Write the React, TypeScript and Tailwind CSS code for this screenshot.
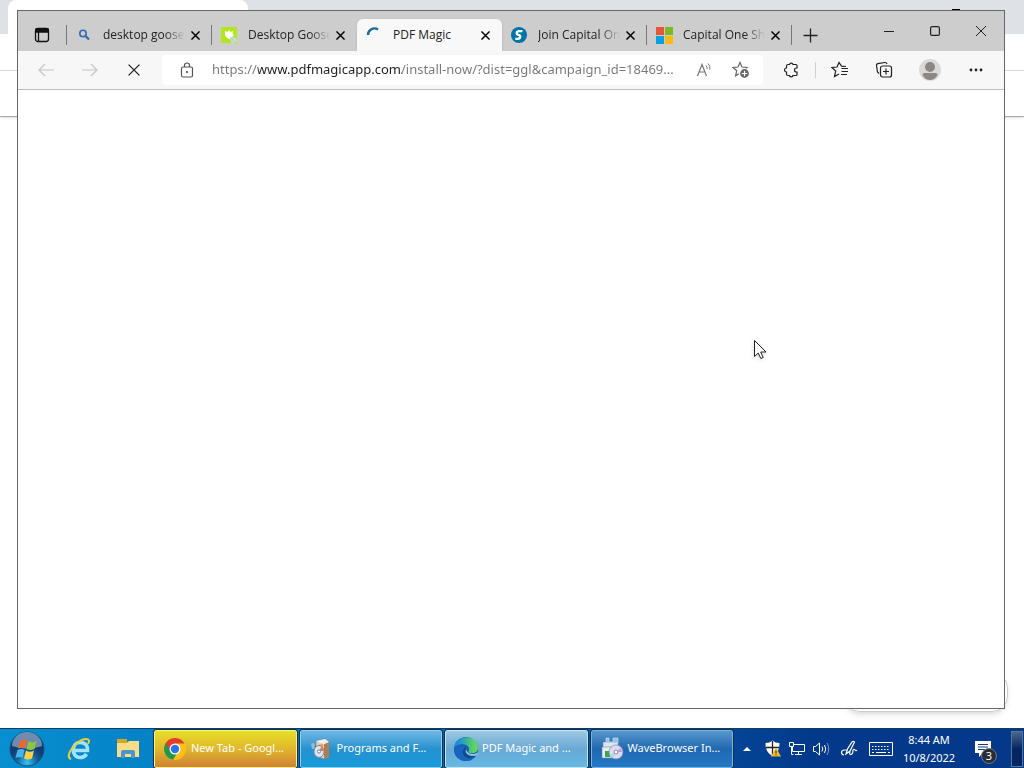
import type { ReactNode } from "react";

const CloseX = ({ size = 9, weight = 1.6 }: { size?: number; weight?: number }) => (
  <svg width={size} height={size} viewBox="0 0 10 10" stroke="currentColor" strokeWidth={weight}>
    <path d="M.5.5l9 9M9.5.5l-9 9" />
  </svg>
);

const SearchFavicon = () => (
  <svg width="16" height="16" viewBox="0 0 16 16" fill="none" stroke="#2f6bb5" strokeWidth="1.6">
    <circle cx="7" cy="6.5" r="3.2" />
    <path d="M9.5 9l3.5 3.5" strokeWidth="2.2" />
  </svg>
);

const GooseFavicon = () => (
  <svg width="16" height="16" viewBox="0 0 16 16">
    <path d="M0 0h16v16H0z" fill="#b5e61d" />
    <path d="M4 4l2.5 1L8 3l1.500 2L12 4l-.5 3 1.500 1-4 4-3-1-2-3z" fill="#fff" />
    <path d="M9 9.5l6 1.500 1 3-3 2-3-1z" fill="#c4dfdc" />
    <path d="M10 11l3 3" stroke="#a3c4cf" />
  </svg>
);

const Spinner = () => (
  <svg width="16" height="16" viewBox="0 0 16 16" fill="none">
    <path d="M2 8A6.500 6.500 0 0 1 12 2.500" stroke="#176d98" strokeWidth="2.4" />
  </svg>
);

const SFavicon = () => (
  <svg width="16" height="16" viewBox="0 0 16 16" fill="none">
    <circle cx="8" cy="8" r="8" fill="#0073a8" />
    <path
      d="M11.500 4.200H8.300c-3.400 0-3.300 3.100-.8 3.700 2.900.6 2 3.900-.7 3.900H4.300"
      stroke="#fff"
      strokeWidth="2.3"
    />
  </svg>
);

const MicrosoftFavicon = () => (
  <svg width="17" height="17" viewBox="0 0 17 17">
    <path d="M0 0h8v8H0z" fill="#e8563a" />
    <path d="M9 0h8v8H9z" fill="#7db821" />
    <path d="M0 9h8v8H0z" fill="#08a1e8" />
    <path d="M9 9h8v8H9z" fill="#fbb912" />
  </svg>
);

const tabs = [
  { title: "desktop goose", icon: <SearchFavicon /> },
  { title: "Desktop Goose", icon: <GooseFavicon /> },
  { title: "PDF Magic", icon: <Spinner />, active: true },
  { title: "Join Capital One", icon: <SFavicon /> },
  { title: "Capital One Shopping", icon: <MicrosoftFavicon /> },
];

const Tab = ({ title, icon, active, line }: any) => (
  <div
    className={`flex h-8 w-[145px] items-center pl-2 ${
      active ? "rounded-t-md bg-[#f8f8f8] shadow-sm" : ""
    }`}
  >
    <button role="tab" aria-selected={!!active} className="flex items-center gap-2.5">
      <span className="flex w-[18px] shrink-0 justify-center">{icon}</span>
      <span
        className={`w-[82px] overflow-hidden text-left text-xs whitespace-nowrap text-[#222] ${
          active ? "" : "mask-r-from-75%"
        }`}
      >
        {title}
      </span>
    </button>
    <button aria-label={`Close ${title}`} className="flex size-5 shrink-0 items-center justify-center">
      <CloseX />
    </button>
    <span className={`ml-auto h-5 w-px ${line ? "bg-[#777]" : ""}`}></span>
  </div>
);

const ToolButton = ({ label, className, children }: { label: string; className: string; children: ReactNode }) => (
  <button aria-label={label} className={`flex h-full shrink-0 items-center justify-center ${className}`}>
    {children}
  </button>
);

const TitleBar = () => (
  <div className="flex h-10 items-end bg-[#cdcdcd]">
    <div className="flex h-8 min-w-0 flex-1 items-center">
      <ToolButton label="Tab actions" className="w-12">
        <svg width="16" height="16" viewBox="0 0 16 16" fill="none" stroke="#111" strokeWidth="1.3">
          <rect x="1.5" y="1.5" width="13" height="13" rx="2.5" />
          <path d="M2 2h12v3H2z" fill="#111" />
          <path d="M4.5 5v9" />
        </svg>
      </ToolButton>
      <span className="h-5 w-px bg-[#777]"></span>
      <div role="tablist" className="flex min-w-0">
        {tabs.map((tab, i) => (
          <Tab key={tab.title} {...tab} line={!tab.active && !tabs[i + 1]?.active} />
        ))}
      </div>
      <ToolButton label="New tab" className="w-9">
        <svg width="15" height="15" viewBox="0 0 15 15" stroke="#222" strokeWidth="1.3">
          <path d="M7.5.5v14M.5 7.5h14" />
        </svg>
      </ToolButton>
    </div>
    <div className="flex h-10 items-center text-[#222]">
      <ToolButton label="Minimize" className="w-[46px]">
        <svg width="10" height="10" viewBox="0 0 10 10" stroke="currentColor">
          <path d="M0 5.5h10" />
        </svg>
      </ToolButton>
      <ToolButton label="Maximize" className="w-[46px]">
        <svg width="10" height="10" viewBox="0 0 10 10" fill="none" stroke="currentColor" strokeWidth="1.2">
          <rect x=".6" y=".6" width="8.8" height="8.8" rx="1.5" />
        </svg>
      </ToolButton>
      <ToolButton label="Close" className="w-[46px]">
        <svg width="10" height="10" viewBox="0 0 10 10" stroke="currentColor">
          <path d="M0 0l10 10M10 0L0 10" />
        </svg>
      </ToolButton>
    </div>
  </div>
);

const AddressBar = () => (
  <form className="flex h-[30px] min-w-0 flex-1 items-center rounded bg-white pr-1">
    <ToolButton label="View site information" className="w-[50px]">
      <svg width="14" height="16" viewBox="0 0 14 16" fill="none" stroke="#555" strokeWidth="1.2">
        <rect x="1.5" y="5" width="11" height="10" rx="1.5" />
        <path d="M4.5 5V3.500a2.500 2.500 0 0 1 5 0V5" />
        <circle cx="7" cy="10" r=".5" fill="#555" />
      </svg>
    </ToolButton>
    <input
      type="text"
      aria-label="Address and search bar"
      className="min-w-0 flex-1 bg-[linear-gradient(90deg,#777_46px,#1f1f1f_46px,#1f1f1f_190px,#777_190px)] bg-clip-text font-['Noto_Sans',sans-serif] text-[13px] text-transparent outline-none"
      defaultValue="https://www.pdfmagicapp.com/install-now/?dist=ggl&campaign_id=18469..."
    />
    <ToolButton label="Read aloud" className="w-9">
      <svg width="18" height="16" viewBox="0 0 18 16" fill="none" stroke="#777" strokeWidth="1.2">
        <path d="M1.500 14L6 2.500 10.500 14M3 10h6" />
        <path d="M10 3.500q1.500 1.500 1 3.500M12 1.500q2.700 2.500 1.700 6" strokeWidth="1" />
      </svg>
    </ToolButton>
    <ToolButton label="Add this page to favorites" className="w-9">
      <svg width="18" height="18" viewBox="0 0 18 18" fill="none" stroke="#666" strokeWidth="1.2">
        <path d="M8 1.500l2 4.500 5 .5-3.700 3.300 1.100 5L8 12.300l-4.400 2.500 1.100-5L1 6.500 6 6z" />
        <circle cx="12.5" cy="12.5" r="5" fill="#666" stroke="#fff" />
        <path d="M12.500 9.800v5.400M9.800 12.500h5.400" stroke="#fff" />
      </svg>
    </ToolButton>
  </form>
);

const Toolbar = () => (
  <div className="flex h-[39px] items-center border-b border-[#bdbdbd] bg-[#f7f7f7] pl-1.5 text-[#222]">
    <ToolButton label="Back" className="w-11 text-[#c4c4c4]">
      <svg width="16" height="14" viewBox="0 0 16 14" fill="none" stroke="currentColor" strokeWidth="1.2">
        <path d="M16 7H1M7 1L1 7l6 6" />
      </svg>
    </ToolButton>
    <ToolButton label="Forward" className="w-11 text-[#c4c4c4]">
      <svg width="16" height="14" viewBox="0 0 16 14" fill="none" stroke="currentColor" strokeWidth="1.2">
        <path d="M0 7h15M9 1l6 6-6 6" />
      </svg>
    </ToolButton>
    <ToolButton label="Stop" className="mr-1.5 w-11">
      <CloseX size={12} weight={1.1} />
    </ToolButton>
    <AddressBar />
    <ToolButton label="Extensions" className="ml-2 w-10">
      <svg width="18" height="18" viewBox="0 0 18 18" fill="none" stroke="#222" strokeWidth="1.2">
        <path d="M6 3.500h1.500a1.800 1.800 0 0 1 3.500 0h3q1 0 1 1V7h-.5a2 2 0 0 0 0 4h.5v2.500q0 1-1 1h-3a1.800 1.800 0 0 1-3.500 0H6q-1.500 0-1.500-1.500v-2a2 2 0 0 1 0-4V5Q4.500 3.500 6 3.500z" />
      </svg>
    </ToolButton>
    <span className="ml-1 h-4 w-px bg-[#d0d0d0]"></span>
    <ToolButton label="Favorites" className="ml-0.5 w-11">
      <svg width="18" height="18" viewBox="0 0 18 18" fill="none" stroke="#222" strokeWidth="1.2">
        <path d="M15 5.500l-4.500-.3L8 1.500 6 6l-5 .5L4.700 10l-1.200 5.500L8 13M10.500 7.500h6.500M10.500 10.500h6.500M10 13.500h6" />
      </svg>
    </ToolButton>
    <ToolButton label="Collections" className="w-11">
      <svg width="18" height="18" viewBox="0 0 18 18" fill="none" stroke="#222" strokeWidth="1.2">
        <path d="M4 12.500L2.500 11 1.500 4.500Q1.300 3 2.800 2.700L10 1.500q1.500-.2 2 1.500" />
        <rect x="5.5" y="5" width="11" height="11" rx="2" />
        <path d="M11 7.500v6M8 10.500h6" />
      </svg>
    </ToolButton>
    <ToolButton label="Profile" className="w-12">
      <svg width="22" height="22" viewBox="0 0 22 22">
        <circle cx="11" cy="11" r="11" fill="#dbd9d7" />
        <circle cx="11" cy="8" r="5" fill="#8b8785" />
        <path d="M3.500 16q0-2 2-2h11q2 0 2 2-2.500 5-7.500 5t-7.500-5z" fill="#8b8785" />
      </svg>
    </ToolButton>
    <ToolButton label="Settings and more" className="mr-1.5 w-11">
      <svg width="14" height="4" viewBox="0 0 14 4" fill="#222">
        <circle cx="2" cy="2" r="1.4" />
        <circle cx="7" cy="2" r="1.4" />
        <circle cx="12" cy="2" r="1.4" />
      </svg>
    </ToolButton>
  </div>
);

// Chrome window left open behind Edge, only its edges stick out
const BackWindow = () => (
  <div className="flex h-full flex-col bg-white">
    <div className="flex h-[34px] bg-[#dee1e6] pl-2">
      <div className="w-60 rounded-t-lg bg-white"></div>
      <div className="flex-1"></div>
      <span className="mt-[9px] mr-16 h-px w-2 bg-black"></span>
    </div>
    <div className="h-[37px] border-b border-[#dcdcdc]"></div>
    <div className="h-[46px] border-b border-[#aaa] shadow"></div>
    <div className="flex-1"></div>
    <div className="mr-4 mb-4 h-10 w-[164px] self-end rounded-2xl border border-[#ccc] shadow-md"></div>
  </div>
);

const ChromeIcon = () => (
  <svg width="22" height="22" viewBox="0 0 24 24">
    <circle cx="12" cy="12" r="12" fill="#fbc116" />
    <path d="M12 12L1.600 6A12 12 0 0 0 10 23.800l5.500-9.800z" fill="#23974a" />
    <path d="M1.600 6A12 12 0 0 1 22.400 6H12L8 15z" fill="#e33b2e" />
    <circle cx="12" cy="12" r="6" fill="#fff" />
    <circle cx="12" cy="12" r="4.6" fill="#2a73e8" />
  </svg>
);

const ProgramsIcon = () => (
  <svg width="20" height="22" viewBox="0 0 20 22">
    <path d="M5 3l9-2 4 3v15l-5 2-8-3z" fill="#ddd5ca" stroke="#6c7c8c" strokeWidth=".6" />
    <path d="M13 6l5-2v15l-5 2z" fill="#a98056" />
    <path d="M5 3l8 3 5-2-4-3z" fill="#f4efe5" />
    <path d="M6 7l6-1v5z" fill="#ef9c49" />
    <ellipse cx="8" cy="13.5" rx="5" ry="6" fill="#dfe6ee" stroke="#71879d" />
    <path d="M8 13l3-5 2 5z" fill="#d97d5b" />
    <circle cx="8" cy="13.5" r="1.6" fill="#fff" stroke="#71879d" />
    <path d="M0 6q2-2 4 0l-1 5H1z" fill="#9bb8cd" />
  </svg>
);

const EdgeIcon = () => (
  <svg width="24" height="24" viewBox="0 0 24 24">
    <defs>
      <linearGradient id="edge-top" x1="0" x2="1">
        <stop offset=".2" stopColor="#1d91d5" />
        <stop offset=".9" stopColor="#62d957" />
      </linearGradient>
    </defs>
    <circle cx="12" cy="12" r="12" fill="#155baf" />
    <path d="M0 11C1-2 22-4 24 10c.5 5-4 7-8 6-3-1-1-2-1-4 0-5-10-7-15-1z" fill="url(#edge-top)" />
    <path d="M0 12c3-5 10-5 12-2-5 1-5 9 1 11 4 1 7-1 9-3-3 7-13 7-17 4Q0 19 0 12z" fill="#1766bd" />
    <path d="M12 10c-5 3-3 10 2 11 4 1 7-2 8-4-5 2-11 0-10-7z" fill="#10488d" />
    <path d="M13 10q-2 3 1 5.500 4 3 9.500 0V18q-5 2-9 0-5-3-1.500-8z" fill="#8fc5e4" />
  </svg>
);

const InstallerIcon = () => (
  <svg width="24" height="24" viewBox="0 0 24 24">
    <path d="M3 5h15v6H3z" fill="#dbe6ee" stroke="#6985a0" strokeWidth=".6" />
    <path d="M6 1h3v4h4V1h5v5H6z" fill="#8fc4ea" stroke="#dbe6ee" strokeWidth=".6" />
    <path d="M2 10h11v11H2z" fill="#e8edf2" stroke="#7189a3" strokeWidth=".6" />
    <path d="M5 14h5v6H5z" fill="#3aa844" />
    <circle cx="16" cy="15" r="7" fill="#dbdcf0" stroke="#8288b5" strokeWidth=".7" />
    <path d="M16 15l5-4 1 4z" fill="#c898d5" />
    <path d="M16 15l-6 3 3 3z" fill="#b4d5ec" />
    <circle cx="16" cy="15" r="2" fill="#fff" stroke="#8288b5" />
  </svg>
);

const tasks = [
  {
    title: "New Tab - Googl...",
    icon: <ChromeIcon />,
    style: "border-[#fff38a] bg-linear-to-b from-[#e6df27] via-[#dfb72b] to-[#d08035]",
  },
  {
    title: "Programs and F...",
    icon: <ProgramsIcon />,
    style: "border-[#8ed0ef] bg-linear-to-b from-[#6cb9e3] via-[#2591cf] to-[#149bdc]",
  },
  {
    title: "PDF Magic and ...",
    icon: <EdgeIcon />,
    style: "border-[#c6e5f5] bg-linear-to-b from-[#9dc8e2] via-[#67a9d5] to-[#66b8e5]",
  },
  {
    title: "WaveBrowser In...",
    icon: <InstallerIcon />,
    style: "border-[#79b3df] bg-linear-to-b from-[#5797cc] via-[#1f68b1] to-[#2479c6]",
  },
];

const StartIcon = () => (
  <svg width="36" height="36" viewBox="0 0 36 36">
    <defs>
      <radialGradient id="orb" cy=".9">
        <stop offset="0" stopColor="#35c6f1" />
        <stop offset=".6" stopColor="#16619d" />
        <stop offset="1" stopColor="#123d70" />
      </radialGradient>
    </defs>
    <circle cx="18" cy="18" r="17" fill="url(#orb)" stroke="#195081" />
    <path d="M3 15a15 14 0 0 1 30 0Q18 20 3 15z" fill="#c7dceb" opacity=".5" />
    <path d="M11 10q4-3 7-.5l-2 8q-3-2-7 0z" fill="#ef6534" />
    <path d="M19.500 10q4 2.500 8 0l-2 8q-4 2-8 0z" fill="#8cc63f" />
    <path d="M8.500 19q4-2 7 0l-2 8q-3-2-7 0z" fill="#45b5ed" />
    <path d="M17 19.500q4 2.500 8 0l-2 8q-4 2-8 0z" fill="#ffd044" />
  </svg>
);

const IeIcon = () => (
  <svg width="24" height="24" viewBox="0 0 24 24" fill="none">
    <path d="M19.500 17q-2 3.500-6.500 3.500c-9 0-9-15 0-15 6 0 8 4 7.500 8H8" stroke="#a2e4fc" strokeWidth="3.6" />
    <path d="M4 22c-8-3 7-20 15-20 3 0 4 2 2 5" stroke="#e9cf3c" strokeWidth="2" />
  </svg>
);

const FolderIcon = () => (
  <svg width="24" height="22" viewBox="0 0 24 22">
    <path d="M1 1h10v3h12v5H1z" fill="#d9a420" />
    <path d="M1 5h10l2-2h10v16H1z" fill="#f9dc83" />
    <path d="M5 20v-6q0-2 2-2h10q2 0 2 2v6h-4v-4H9v4z" fill="#4b96cc" />
  </svg>
);

const Tray = () => (
  <div className="flex h-full items-center text-white">
    <ToolButton label="Show hidden icons" className="w-7">
      <svg width="8" height="4" viewBox="0 0 8 4" fill="#fff">
        <path d="M0 4l4-4 4 4z" />
      </svg>
    </ToolButton>
    <ToolButton label="Security" className="w-6">
      <svg width="16" height="17" viewBox="0 0 16 17">
        <path d="M7.500.5Q10 3 14.500 3q.5 9-7 13Q0 12 .5 3 5 3 7.500.5z" fill="#fff" />
        <path d="M7.500 1v14M1 7.500h13" stroke="#222" strokeWidth="1.3" />
        <path d="M11 7.500l5 9H6z" fill="#f5b82e" />
        <path d="M11 10.500v3M11 14.500v1" stroke="#222" />
      </svg>
    </ToolButton>
    <ToolButton label="Network" className="w-6">
      <svg width="16" height="15" viewBox="0 0 16 15" fill="none" stroke="#fff">
        <path d="M5 3.500h10.500v7H3.500V6M6 13.500h7M9.500 10.500v3" />
        <path d="M.5 1.500h4v4h-4zM2.500 5.500v8h2" />
      </svg>
    </ToolButton>
    <ToolButton label="Volume" className="w-6">
      <svg width="17" height="14" viewBox="0 0 17 14" fill="none" stroke="#fff">
        <path d="M.5 4.500h2l4-3.500v12l-4-3.500h-2z" />
        <path d="M9 4.500q1.500 2.500 0 5M11.500 3q2.500 4 0 8" />
        <path d="M14 1q3.500 6 0 12" opacity=".5" />
      </svg>
    </ToolButton>
    <ToolButton label="Windows Ink Workspace" className="w-8">
      <svg width="18" height="18" viewBox="0 0 18 18" fill="none" stroke="#fff" strokeWidth="1.2">
        <path d="M6 14l1.500-5L12 2q1.500-1.500 2.500 0L10 11l-4 3zM6.500 10H4.500q-3 0-3 2.500 0 2 2.500 2.500M10 11q-1 4 1 3.500T13 10q1-1.500 2 0t2 0" />
      </svg>
    </ToolButton>
    <ToolButton label="Touch keyboard" className="w-8">
      <svg width="24" height="14" viewBox="0 0 24 14" fill="none" stroke="#fff">
        <path d="M.5.5h23v13H.5z" />
        <path d="M3 4.500h18M3 7.500h18" strokeDasharray="1.5 1.5" />
        <path d="M3 10.500h2M7 10.500h10M19 10.500h2" />
      </svg>
    </ToolButton>
    <button className="w-16 text-center text-[11px] leading-[18px]">
      <span className="block">8:44 AM</span>
      <span className="block">10/8/2022</span>
    </button>
    <ToolButton label="Notifications" className="relative w-11">
      <svg width="16" height="16" viewBox="0 0 16 16">
        <path d="M0 0h16v12H8l-4 4v-4H0z" fill="#fff" />
        <path d="M3 3.500h10M3 6h10M3 8.500h7" stroke="#123b77" />
      </svg>
      <span className="absolute right-2 bottom-1 flex size-4 items-center justify-center rounded-full border border-[#777] bg-[#292d3a] text-[11px] text-white">
        3
      </span>
    </ToolButton>
    <button
      aria-label="Show desktop"
      className="mr-px ml-1.5 h-9 w-3 border border-[#55779d] bg-linear-to-b from-[#4c6688] to-[#06245f] to-50%"
    ></button>
  </div>
);

const Taskbar = () => (
  <footer className="flex h-10 items-center border-t border-[#123c60] bg-linear-to-r from-[#078fd0] via-[#075fae] via-55% to-[#03388a] to-80% font-['Noto_Sans',sans-serif]">
    <ToolButton label="Start" className="w-[54px]">
      <StartIcon />
    </ToolButton>
    <ToolButton label="Internet Explorer" className="w-[49px]">
      <IeIcon />
    </ToolButton>
    <ToolButton label="File Explorer" className="w-[49px]">
      <FolderIcon />
    </ToolButton>
    <div className="ml-0.5 flex min-w-0 flex-1 gap-[3px]">
      {tasks.map((task) => (
        <button
          key={task.title}
          className={`flex h-[38px] min-w-0 flex-1 items-center gap-1 rounded-xs border pl-2 text-[11px] whitespace-nowrap text-white outline outline-[#0b2f50] ${task.style}`}
        >
          <span className="flex w-6 shrink-0 justify-center">{task.icon}</span>
          {task.title}
        </button>
      ))}
    </div>
    <Tray />
  </footer>
);

export default function App() {
  return (
    <div className="flex h-screen flex-col overflow-hidden font-['Open_Sans','Noto_Sans',sans-serif]">
      <main className="relative min-h-0 flex-1">
        <BackWindow />
        <section className="absolute top-2.5 right-[19px] bottom-[19px] left-[17px] flex flex-col border border-[#666] bg-white">
          <TitleBar />
          <Toolbar />
          <div className="flex-1 bg-white"></div>
        </section>
        <svg
          className="absolute top-[340px] left-[754px] drop-shadow-sm"
          width="13"
          height="20"
          viewBox="0 0 13 20"
          fill="#fff"
          stroke="#222"
        >
          <path d="M.5.5v16l3.700-3.500 2.600 5.500 2.400-1-2.500-5.500h5.300z" />
        </svg>
      </main>
      <Taskbar />
    </div>
  );
}
